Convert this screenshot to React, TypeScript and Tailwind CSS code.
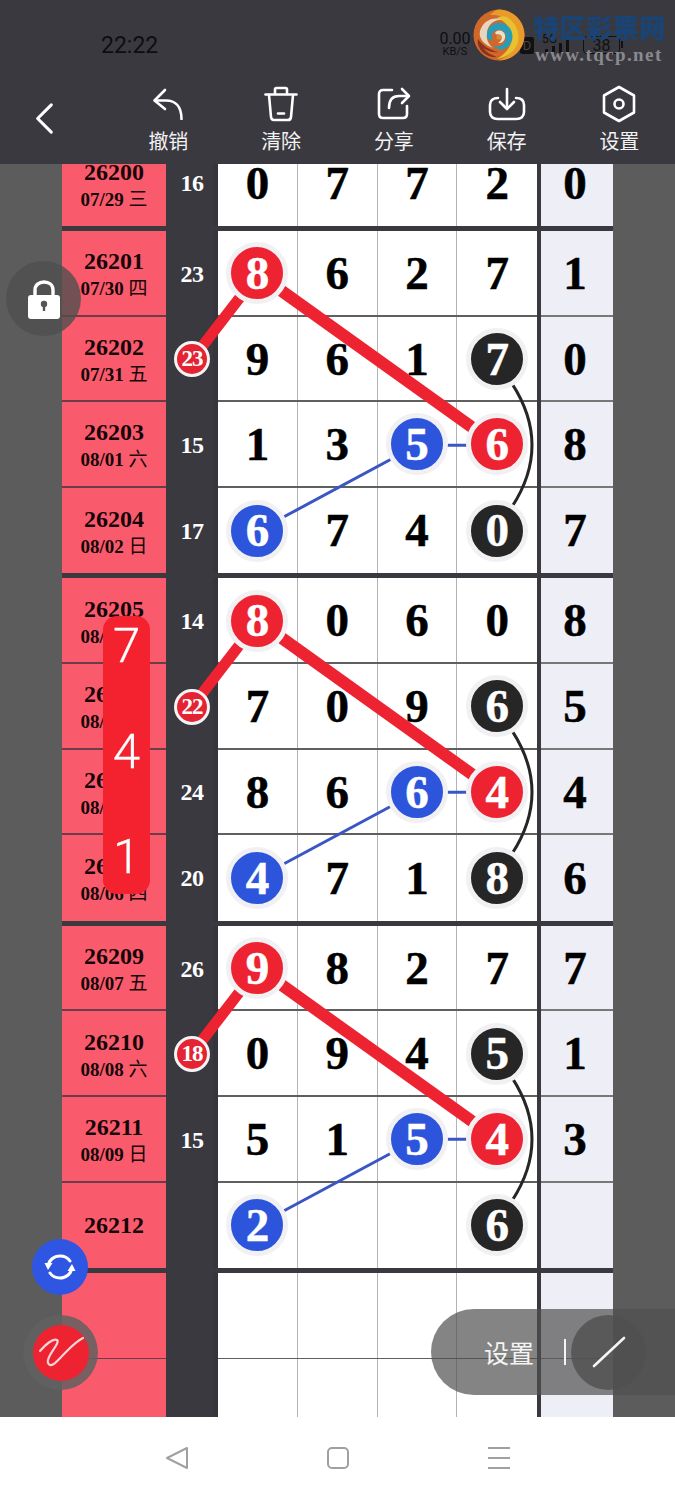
import { ReactNode } from "react";

type Ball = "r" | "b" | "k" | "";

interface Row {
  id: string;
  date: string;
  num?: string;
  mark?: string;
  cells: [string, Ball][];
  tail: string;
}

const groups: Row[][] = [
  [
    { id: "26200", date: "07/29 三", num: "16", cells: [["0", ""], ["7", ""], ["7", ""], ["2", ""]], tail: "0" },
  ],
  [
    { id: "26201", date: "07/30 四", num: "23", cells: [["8", "r"], ["6", ""], ["2", ""], ["7", ""]], tail: "1" },
    { id: "26202", date: "07/31 五", mark: "23", cells: [["9", ""], ["6", ""], ["1", ""], ["7", "k"]], tail: "0" },
    { id: "26203", date: "08/01 六", num: "15", cells: [["1", ""], ["3", ""], ["5", "b"], ["6", "r"]], tail: "8" },
    { id: "26204", date: "08/02 日", num: "17", cells: [["6", "b"], ["7", ""], ["4", ""], ["0", "k"]], tail: "7" },
  ],
  [
    { id: "26205", date: "08/03 一", num: "14", cells: [["8", "r"], ["0", ""], ["6", ""], ["0", ""]], tail: "8" },
    { id: "26206", date: "08/04 二", mark: "22", cells: [["7", ""], ["0", ""], ["9", ""], ["6", "k"]], tail: "5" },
    { id: "26207", date: "08/05 三", num: "24", cells: [["8", ""], ["6", ""], ["6", "b"], ["4", "r"]], tail: "4" },
    { id: "26208", date: "08/06 四", num: "20", cells: [["4", "b"], ["7", ""], ["1", ""], ["8", "k"]], tail: "6" },
  ],
  [
    { id: "26209", date: "08/07 五", num: "26", cells: [["9", "r"], ["8", ""], ["2", ""], ["7", ""]], tail: "7" },
    { id: "26210", date: "08/08 六", mark: "18", cells: [["0", ""], ["9", ""], ["4", ""], ["5", "k"]], tail: "1" },
    { id: "26211", date: "08/09 日", num: "15", cells: [["5", ""], ["1", ""], ["5", "b"], ["4", "r"]], tail: "3" },
    { id: "26212", date: "", cells: [["2", "b"], ["", ""], ["", ""], ["6", "k"]], tail: "" },
  ],
  [
    { id: "", date: "", cells: [["", ""], ["", ""], ["", ""], ["", ""]], tail: "" },
    { id: "", date: "", cells: [["", ""], ["", ""], ["", ""], ["", ""]], tail: "" },
  ],
];

const ballColor: Record<string, string> = {
  r: "bg-[#ee2331]",
  b: "bg-[#2d55dc]",
  k: "bg-[#262626]",
};

function ToolItem({ label, children }: { label: string; children: ReactNode }) {
  return (
    <div className="w-[112.75px] flex flex-col items-center shrink-0">
      <div className="h-[38px] w-[40px] flex items-center justify-center">{children}</div>
      <div className="mt-[5px] text-[20px] leading-[26px] text-[#f2f2f2] font-['Noto_Sans_CJK_SC',sans-serif]">{label}</div>
    </div>
  );
}

function TableRow({ row, line }: { row: Row; line: string }) {
  const [day, week] = row.date.split(" ");
  const push = line ? "pt-[1px]" : "";
  return (
    <div className="flex h-[85.6px]">
      <div className={`w-[104px] bg-[#f95b6c] border-[#6d3c4a] ${line} flex flex-col items-center justify-center ${row.date ? "pt-[5px]" : ""} text-[#16060a] font-bold font-['Liberation_Serif','Noto_Sans_CJK_SC',serif]`}>
        {row.id && <div className="text-[24px] leading-[28px]">{row.id}</div>}
        {row.date && (
          <div className="text-[19px] leading-[28px] whitespace-nowrap">
            {day} <span className="font-normal">{week}</span>
          </div>
        )}
      </div>
      <div className="w-[52px] flex items-center justify-center bg-[linear-gradient(90deg,#3a3940_47px,#36353b_47px)] font-bold text-white text-[24px] tracking-[-0.5px] font-['Liberation_Serif',serif]">
        {row.num}
        {row.mark && (
          <div className="relative z-20 w-[36px] h-[36px] rounded-full bg-[#e42432] border-[3px] border-[#f4f4f6] flex items-center justify-center text-[23px] tracking-[-1px]">
            {row.mark}
          </div>
        )}
      </div>
      <div className={`w-[319px] flex bg-white border-[#5f5f5f] ${line}`}>
        {row.cells.map(([digit, ball], i) => (
          <div
            key={i}
            className={`w-[79.75px] flex items-center justify-center ${push} text-[47px] font-bold [-webkit-text-stroke-width:0.5px] text-black font-['Liberation_Serif',serif] ${i < 3 ? "border-r border-[#b4b4b4]" : ""}`}
          >
            {ball ? (
              <div className={`relative z-20 w-[62px] h-[62px] shrink-0 rounded-full border-[5px] border-[#f1f1f4] flex items-center justify-center text-white ${ballColor[ball]}`}>
                {digit}
              </div>
            ) : (
              digit
            )}
          </div>
        ))}
      </div>
      <div className="w-[4px]" />
      <div className={`w-[72px] bg-[#eeeef6] border-[#777] ${line} flex items-center justify-center ${push} pr-[4px] text-[47px] font-bold [-webkit-text-stroke-width:0.5px] text-black font-['Liberation_Serif',serif]`}>
        {row.tail}
      </div>
    </div>
  );
}

function Lines({ y }: { y: number }) {
  // y is the centre of the first row of the group, page coordinates
  const r2 = y + 85.6;
  const r3 = y + 171.2;
  const r4 = y + 256.8;
  return (
    <g fill="none">
      <line x1="258" y1={y} x2="497" y2={r3} stroke="#ee2331" strokeWidth="12" />
      <line x1="258" y1={y} x2="192" y2={r2} stroke="#ee2331" strokeWidth="11" />
      <line x1="258" y1={r4} x2="417" y2={r3} stroke="#3a56c4" strokeWidth="3" />
      <line x1="417" y1={r3} x2="497" y2={r3} stroke="#3a56c4" strokeWidth="3" />
      <path d={`M512 ${r2 + 24} Q552 ${r3} 512 ${r4 - 24}`} stroke="#262626" strokeWidth="3" />
    </g>
  );
}

function Logo() {
  return (
    <svg viewBox="0 0 52 52" className="absolute left-[473px] top-[9px] w-[52px] h-[52px]">
      <circle cx="26" cy="26" r="25.5" fill="#d2672a" />
      <path d="M26 .5C40 .5 51.5 12 51.5 26C51.5 40 40 51.5 26 51.5C38 46 46 37 44 25C42 13 30 5 17 6C20 3 23 .5 26 .5Z" fill="#e89a2a" />
      <path d="M34 8C44 14 48 26 44 36C40 44 32 49 24 50C34 44 40 36 38 26C37 18 32 12 24 9C27 7 31 7 34 8Z" fill="#e8c030" />
      <path d="M7 22C10 12 20 7 30 11C22 10 15 15 14 24C13 30 15 35 20 39C12 36 5 30 7 22Z" fill="#e7d5bd" />
      <path d="M14 27C13 17 23 11 32 15C40 19 42 30 36 37C31 42 24 41 20 37C27 39 33 35 33 28C33 22 26 19 22 22C19 24 18 28 20 31C16 32 14 30 14 27Z" fill="#2a9cb8" />
      <path d="M22 24C24 20 31 21 32 26C33 31 29 35 25 34C29 32 30 28 27 26C25 25 23 26 22 24Z" fill="#e6e2d2" />
      <circle cx="26" cy="28" r="2.6" fill="#d78a30" />
      <path d="M5 30C10 37 17 41 25 43C20 44 15 42 10 39C13 43 18 46 24 48C17 49 10 45 7 40C5 37 4 33 5 30Z" fill="#8a3420" />
    </svg>
  );
}

export default function App() {
  return (
    <div className="relative w-[675px] h-[1500px] overflow-hidden bg-white flex flex-col">
      {/* header */}
      <div className="h-[164px] shrink-0 bg-[#3a3940] flex flex-col">
        <div className="h-[85px] pl-[101px] pt-[30px] text-[23px] leading-[32px] text-[#0e0e10] font-['Roboto',sans-serif]">22:22</div>
        <div className="flex items-start">
          <div className="w-[112px] pl-[34px] pt-[17px] shrink-0">
            <svg viewBox="0 0 22 34" className="w-[20px] h-[33px]" fill="none" stroke="#fff" strokeWidth="3.4" strokeLinecap="round" strokeLinejoin="round">
              <path d="M19 2L4 17L19 32" />
            </svg>
          </div>
          <ToolItem label="撤销">
            <svg viewBox="0 0 32 32" className="w-[32px] h-[32px]" fill="none" stroke="#fff" strokeWidth="2.6" strokeLinecap="round" strokeLinejoin="round">
              <path d="M13 2L2.5 12.5L13 21" />
              <path d="M3 12.5H14C23 12.5 29.5 18 29.5 31" />
            </svg>
          </ToolItem>
          <ToolItem label="清除">
            <svg viewBox="0 0 34 36" className="w-[34px] h-[36px]" fill="none" stroke="#fff" strokeWidth="2.6" strokeLinecap="round" strokeLinejoin="round">
              <path d="M1.5 8.5H32.5" />
              <path d="M11 8V3.5C11 2.5 11.5 2 12.5 2H21.5C22.5 2 23 2.5 23 3.5V8" />
              <path d="M5 9L7 31C7.2 33 8.4 34 10 34H24C25.6 34 26.8 33 27 31L29 9" />
              <path d="M14 27.5H20" />
            </svg>
          </ToolItem>
          <ToolItem label="分享">
            <svg viewBox="0 0 34 34" className="w-[34px] h-[34px]" fill="none" stroke="#fff" strokeWidth="2.6" strokeLinecap="round" strokeLinejoin="round">
              <path d="M15 3H6C3.5 3 2 4.5 2 7V27C2 29.5 3.5 31 6 31H26C28.5 31 30 29.5 30 27V19" />
              <path d="M25 2L32 9L25 16" />
              <path d="M31 9H22C15.5 9 12 13 12 21" />
            </svg>
          </ToolItem>
          <ToolItem label="保存">
            <svg viewBox="0 0 38 34" className="w-[38px] h-[34px]" fill="none" stroke="#fff" strokeWidth="2.6" strokeLinecap="round" strokeLinejoin="round">
              <path d="M10 11C5 11 2 13.5 2 18V25C2 29.5 5 32 9.5 32H28.5C33 32 36 29.5 36 25V18C36 13.5 33 11 28 11" />
              <path d="M19 2V21" />
              <path d="M12 15L19 22L26 15" />
            </svg>
          </ToolItem>
          <ToolItem label="设置">
            <svg viewBox="0 0 34 38" className="w-[34px] h-[38px]" fill="none" stroke="#fff" strokeWidth="2.6" strokeLinejoin="round">
              <path d="M17 2L32 10.5V27.5L17 36L2 27.5V10.5Z" />
              <circle cx="17" cy="19" r="4.5" />
            </svg>
          </ToolItem>
        </div>
      </div>

      {/* watermark and status icons under it */}
      <div className="absolute left-[437px] top-[31px] w-[36px] flex flex-col items-center text-[#0e0e10] font-['Roboto',sans-serif]">
        <div className="text-[16px] leading-[16px]">0.00</div>
        <div className="text-[11px] leading-[10px]">KB/S</div>
      </div>
      <div className="absolute left-[520px] top-[37px] w-[14px] h-[17px] bg-[#111] rounded-[2px] text-[#444] text-[13px] leading-[17px] text-center font-['Roboto',sans-serif]">D</div>
      <div className="absolute left-[542px] top-[33px] text-[12px] leading-[13px] text-[#0e0e10] font-['Roboto',sans-serif]">5G</div>
      <div className="absolute left-[545px] top-[40px] flex items-end gap-[4px] h-[13px]">
        <div className="w-[3px] h-[4px] bg-[#111]" />
        <div className="w-[3px] h-[7px] bg-[#111]" />
        <div className="w-[3px] h-[10px] bg-[#111]" />
        <div className="w-[3px] h-[13px] bg-[#111]" />
      </div>
      <div className="absolute left-[583px] top-[36px] w-[37px] h-[18px] rounded-[4px] border border-[#111] text-center text-[16px] leading-[17px] text-[#111] font-['Roboto',sans-serif]">38</div>
      <div className="absolute left-[621px] top-[41px] w-[2px] h-[7px] bg-[#111]" />
      <Logo />
      <div className="absolute left-[533px] top-[13px] text-[26.5px] leading-[28px] font-black text-[#1a4475] whitespace-nowrap blur-[0.6px] font-['Noto_Sans_CJK_SC',sans-serif]">特区彩票网</div>
      <div className="absolute left-[535px] top-[44px] text-[19px] leading-[22px] tracking-[1.4px] font-bold text-[#8a8a8e] whitespace-nowrap font-['Liberation_Serif',serif]">www.tqcp.net</div>

      {/* table */}
      <div className="relative h-[1253px] shrink-0 overflow-hidden bg-[#5c5c5c]">
        <div className="ml-[62px] w-[551px] mt-[-23.6px] flex flex-col gap-[5px] bg-[#3a3940]">
          {groups.map((group, g) => (
            <div key={g} className="flex flex-col">
              {group.map((row, i) => (
                <TableRow
                  key={i}
                  row={row}
                  line={g === groups.length - 1 ? "border-b" : i < group.length - 1 ? "border-b-2" : ""}
                />
              ))}
            </div>
          ))}
        </div>
        <svg viewBox="0 164 675 1253" className="absolute left-0 top-0 w-[675px] h-[1253px] z-10">
          <Lines y={274} />
          <Lines y={621} />
          <Lines y={968} />
        </svg>
      </div>

      {/* android nav bar */}
      <div className="flex-1 flex items-center justify-center gap-[137px] pb-[1px]">
        <svg viewBox="0 0 24 24" className="w-[24px] h-[24px]" fill="none" stroke="#a0a0a0" strokeWidth="2" strokeLinejoin="round">
          <path d="M22 2V22L2 12Z" />
        </svg>
        <svg viewBox="0 0 24 24" className="w-[24px] h-[24px]" fill="none" stroke="#a0a0a0" strokeWidth="2">
          <rect x="2" y="2" width="20" height="20" rx="4" />
        </svg>
        <svg viewBox="0 0 24 24" className="w-[24px] h-[24px]" fill="none" stroke="#a0a0a0" strokeWidth="2">
          <path d="M1 2H23M1 12H23M1 22H23" />
        </svg>
      </div>

      {/* floating controls */}
      <div className="absolute z-30 left-[6px] top-[261px] w-[75px] h-[75px] rounded-full bg-[#4f4f4f]/80 flex items-center justify-center">
        <svg viewBox="0 0 32 40" className="w-[32px] h-[40px]">
          <path d="M7 18V11C7 6 11 3 16 3C21 3 25 6 25 11V18" fill="none" stroke="#fff" strokeWidth="3.4" />
          <rect x="0" y="16" width="32" height="24" rx="3" fill="#fff" />
          <circle cx="16" cy="25" r="3.2" fill="#555" />
          <rect x="14.8" y="26" width="2.4" height="6" fill="#555" />
        </svg>
      </div>

      <div className="absolute z-30 left-[103px] top-[616px] w-[47px] h-[278px] rounded-[14px] bg-[#f4212e] flex flex-col items-center justify-between pb-[7px] text-[49px] leading-[60px] text-white font-light [-webkit-text-stroke-width:0.3px] font-['Roboto',sans-serif]">
        <div>7</div>
        <div>4</div>
        <div>1</div>
      </div>

      <div className="absolute z-30 left-[32px] top-[1239px] w-[56px] h-[56px] rounded-full bg-[#2f56e2] flex items-center justify-center">
        <svg viewBox="0 0 32 32" className="w-[32px] h-[32px]" fill="none" stroke="#fff" strokeWidth="3" strokeLinecap="round">
          <path d="M4 15C5 9 10 5 16 5C20 5 24 7 26 10" />
          <path d="M28 17C27 23 22 27 16 27C12 27 8 25 6 22" />
          <path d="M0.5 12L8.5 12L4 19Z" fill="#fff" stroke="none" />
          <path d="M31.5 20L23.5 20L28 13Z" fill="#fff" stroke="none" />
        </svg>
      </div>

      <div className="absolute z-30 left-[23px] top-[1315px] w-[75px] h-[75px] rounded-full bg-[#606060]/85 flex items-center justify-center">
        <div className="w-[56px] h-[56px] rounded-full bg-[#ee2331]">
          <svg viewBox="0 0 56 56" className="w-[56px] h-[56px]" fill="none" stroke="#f8d4d8" strokeWidth="2.2" strokeLinecap="round">
            <path d="M7 26C12 20 20 13 24 15C28 18 12 32 15 38C18 44 24 36 30 30C36 24 42 17 50 13" />
          </svg>
        </div>
      </div>

      <div className="absolute z-30 left-[431px] top-[1309px] w-[244px] h-[86px] rounded-l-[43px] bg-[#505050]/70 flex items-center">
        <div className="ml-[53px] text-[25px] leading-[34px] text-[#f4f4f4] font-['Noto_Sans_CJK_SC',sans-serif]">设置</div>
        <div className="ml-[30px] w-[2px] h-[26px] bg-[#f4f4f4]" />
        <div className="ml-[5px] w-[75px] h-[75px] rounded-full bg-[#505050]/80 flex items-center justify-center">
          <svg viewBox="0 0 34 32" className="w-[34px] h-[32px]" fill="none" stroke="#f4f4f4" strokeWidth="2.6" strokeLinecap="round">
            <path d="M2 30L32 2" />
          </svg>
        </div>
      </div>
    </div>
  );
}
